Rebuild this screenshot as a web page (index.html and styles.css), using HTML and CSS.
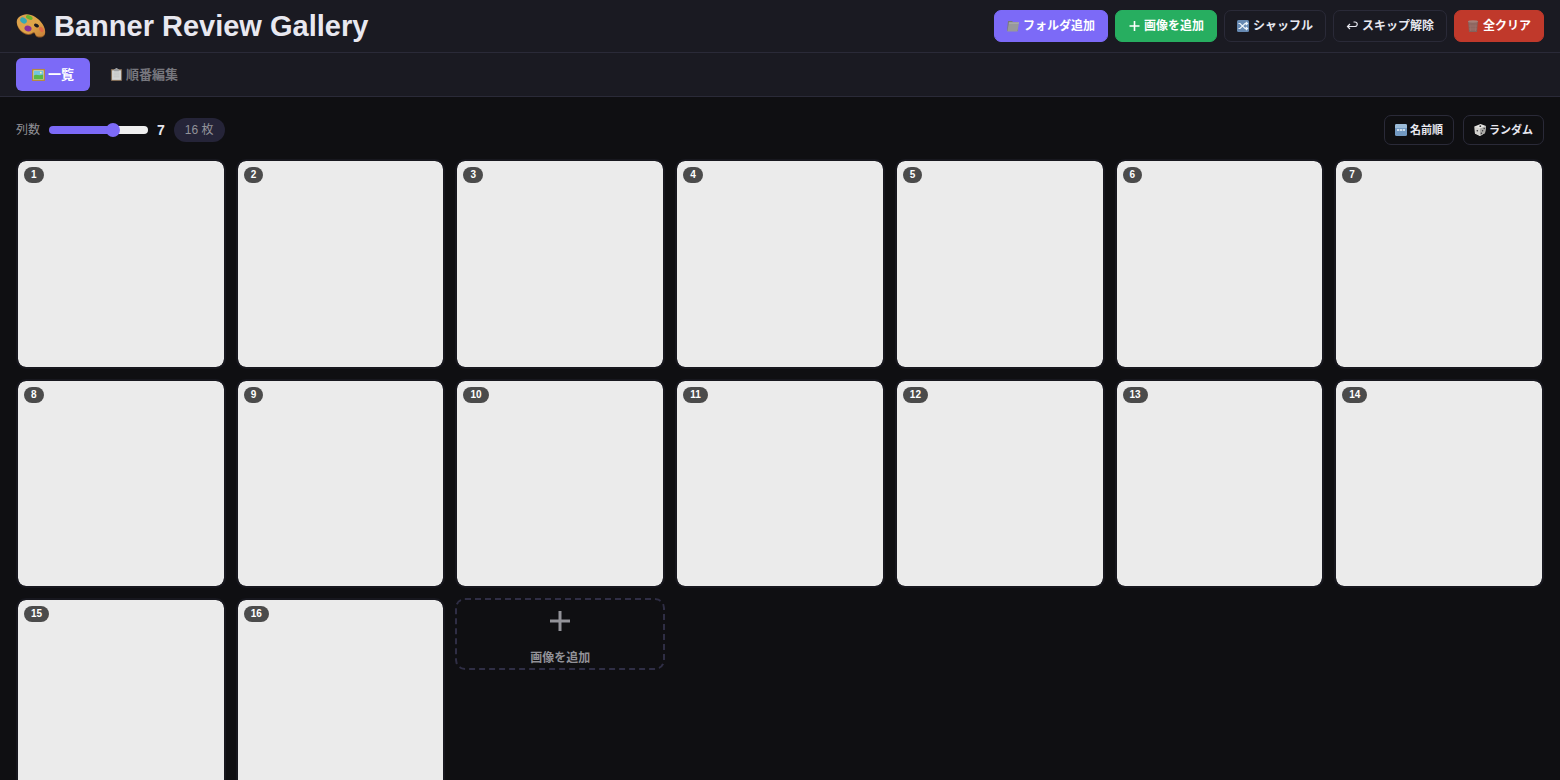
FILE: index.html
```html
<!DOCTYPE html>
<html lang="ja">
<head>
<meta charset="utf-8">
<meta name="viewport" content="width=device-width, initial-scale=1">
<title>Banner Review Gallery</title>
<link rel="stylesheet" href="styles.css">
</head>
<body>
<header class="header">
  <h1 class="title">
    <svg class="title-icon" viewBox="0 0 30 30" aria-hidden="true">
      <defs><linearGradient id="wood" x1="0" y1="0" x2="1" y2="1"><stop offset="0" stop-color="#d9a04e"/><stop offset=".55" stop-color="#e0a548"/><stop offset="1" stop-color="#c67f38"/></linearGradient></defs>
      <path fill="#8b5423" d="M7 5C13 2.500 22 7 26.500 14c3 5 3.500 9 1.500 11-2 2-5 1.700-7 1-2-.8-1.400-2.700-2.500-3.500-1.700-1-3 2-6.500 1.500C6 23 1 17.500.8 12 .7 8.600 3.500 6 7 5z"/>
      <path fill="url(#wood)" d="M7 4C13 1.500 22 6 26.500 13c3 5 3.500 9 1.500 11-2 2-5 1.700-7 1-2-.8-1.400-2.700-2.500-3.500-1.700-1-3 2-6.500 1.500C6 22 1 16.500.8 11 .7 7.600 3.500 5 7 4z"/>
      <ellipse cx="20.500" cy="14.500" rx="2.700" ry="1.700" transform="rotate(30 20.500 14.500)" fill="#1c1a22"/>
      <ellipse cx="13.300" cy="6.500" rx="3.500" ry="2" transform="rotate(25 13.300 6.500)" fill="#67b52d"/>
      <ellipse cx="7.500" cy="9.500" rx="3.600" ry="2.600" transform="rotate(35 7.500 9.500)" fill="#38a9b4"/>
      <ellipse cx="12" cy="17.500" rx="3.600" ry="2.800" transform="rotate(20 12 17.500)" fill="#8b2f98"/>
      <ellipse cx="25.300" cy="18.500" rx="2.900" ry="1.900" transform="rotate(60 25.300 18.500)" fill="#e06a45"/>
    </svg>
    Banner Review Gallery
  </h1>
  <div class="actions">
    <button class="btn btn-primary" type="button">
      <svg class="icon" viewBox="0 0 12 12" aria-hidden="true"><path fill="#77777c" d="M1 1h4l1 1h5v9H0z"/><path fill="#98999a" d="M2 2.500h10L10.500 11.500H.3z"/><path fill="#b4b5b3" d="M2 2.500h10l-.2 1H1.800z"/></svg>
      フォルダ追加</button>
    <button class="btn btn-success" type="button">
      <svg class="icon" viewBox="0 0 12 12" aria-hidden="true"><path stroke="#fff" stroke-width="1.600" d="M6.500 1v10M1.500 6h10"/></svg>
      画像を追加</button>
    <button class="btn" type="button">
      <svg class="icon" viewBox="0 0 12 12" aria-hidden="true"><rect width="12" height="12" rx="1.500" fill="#6689b2"/><path fill="none" stroke="#edf4fa" stroke-width="1.200" d="M1.500 3.500H3l5 5h2M1.500 8.500H3l5-5h2M8.800 2l1.700 1.500L8.800 5M8.800 7l1.700 1.500L8.800 10"/></svg>
      シャッフル</button>
    <button class="btn" type="button">
      <svg class="icon" viewBox="0 0 12 12" aria-hidden="true"><path fill="none" stroke="#e8e8f0" stroke-width="1.200" d="M7.500 2H9a2.200 2.200 0 0 1 0 4.500H1.500M4 4L1.500 6.500 4 9"/></svg>
      スキップ解除</button>
    <button class="btn btn-danger" type="button">
      <svg class="icon" viewBox="0 0 12 12" aria-hidden="true"><path fill="#85615c" d="M1 1h10L10 12H2z"/><ellipse cx="6" cy="1.500" rx="5" ry="1.200" fill="#a78079"/><path stroke="#a57770" stroke-width=".6" d="M3 3l.5 8M5 3v8M7 3v8M9 3l-.5 8M2 6h8M2 9h8"/></svg>
      全クリア</button>
  </div>
</header>
<nav class="tabs">
  <button class="tab tab-active" type="button">
    <svg class="icon tab-icon" viewBox="0 0 14 14" aria-hidden="true"><rect y="1" width="14" height="13" fill="#b58a43"/><rect x="1.500" y="2.500" width="11" height="10" fill="#e9e6bf"/><rect x="2" y="3" width="10" height="9" fill="#72c4df"/><path fill="#57b849" d="M2 8c3-2 5 1 10-1v5H2z"/><circle cx="9.500" cy="5" r="1" fill="#fff6ac"/></svg>
    一覧</button>
  <button class="tab" type="button">
    <svg class="icon tab-icon" viewBox="0 0 14 14" aria-hidden="true"><rect x="1" y="1" width="12" height="13" rx="1" fill="#806b56"/><path fill="#d4d5d5" d="M2.200 2.500h9.600v10.300H2.200z"/><path fill="#999ca0" d="M4.500 1h1.300a1.200 1.200 0 0 1 2.400 0h1.300v2.500h-5z"/><path stroke="#b5b6b7" stroke-width=".6" d="M4 5.500h6M4 7.500h6M4 9.500h6"/></svg>
    順番編集</button>
</nav>
<main class="content">
  <div class="toolbar">
    <label class="columns-label" for="columns">列数</label>
    <input class="slider" id="columns" type="range" min="1" max="10" value="7">
    <output class="columns-value" for="columns">7</output>
    <span class="count">16 枚</span>
    <div class="sort">
      <button class="btn btn-small" type="button">
        <svg class="icon" viewBox="0 0 12 12" aria-hidden="true"><rect width="12" height="12" rx="1.500" fill="#7299c2"/><path fill="#9bbbd8" d="M1.500 0h9A1.500 1.500 0 0 1 12 1.500V4H0V1.500A1.500 1.500 0 0 1 1.500 0z"/><path stroke="#e2edf5" stroke-width="1.600" d="M2 6h8"/><path stroke="#5f86b3" stroke-width=".5" d="M4.500 5v2M7.500 5v2"/></svg>
        名前順</button>
      <button class="btn btn-small" type="button">
        <svg class="icon" viewBox="0 0 12 12" aria-hidden="true"><path fill="#e6e5e2" d="M.5 2.500L6.500 0 12 2l-1 7-5 3-5-2.500z"/><path fill="#aaa9a6" d="M6 4.500L12 2l-1 7-5 3z"/><path fill="#d2d1ce" d="M.5 2.500L6 4.500V12L1 9.500z"/><g fill="#37363a"><circle cx="6.300" cy="2.200" r=".9"/><circle cx="3.300" cy="6.700" r=".8"/><circle cx="10.200" cy="4.500" r=".7"/><circle cx="8.600" cy="6.800" r=".7"/><circle cx="7.400" cy="9.200" r=".7"/></g></svg>
        ランダム</button>
    </div>
  </div>
  <div class="grid">
    <article class="card"><span class="badge">1</span></article>
    <article class="card"><span class="badge">2</span></article>
    <article class="card"><span class="badge">3</span></article>
    <article class="card"><span class="badge">4</span></article>
    <article class="card"><span class="badge">5</span></article>
    <article class="card"><span class="badge">6</span></article>
    <article class="card"><span class="badge">7</span></article>
    <article class="card"><span class="badge">8</span></article>
    <article class="card"><span class="badge">9</span></article>
    <article class="card"><span class="badge">10</span></article>
    <article class="card"><span class="badge">11</span></article>
    <article class="card"><span class="badge">12</span></article>
    <article class="card"><span class="badge">13</span></article>
    <article class="card"><span class="badge">14</span></article>
    <article class="card"><span class="badge">15</span></article>
    <article class="card"><span class="badge">16</span></article>
    <button class="add-card" type="button">
      <svg class="add-icon" viewBox="0 0 20 20" aria-hidden="true"><path stroke="#929298" stroke-width="3" d="M10 0v20M0 10h20"/></svg>
      画像を追加</button>
  </div>
</main>
</body>
</html>
```
FILE: styles.css
```css
* { box-sizing: border-box; }

body {
  margin: 0;
  height: 100vh;
  display: flex;
  flex-direction: column;
  overflow: hidden;
  background: #0f0f12;
  color: #e8e8f0;
  font-family: "Liberation Sans", "Noto Sans CJK JP", sans-serif;
  font-size: 12px;
  line-height: 16px;
}

button { font-family: inherit; line-height: inherit; cursor: pointer; }

.header {
  display: flex;
  align-items: center;
  justify-content: space-between;
  padding: 10px 16px;
  background: #1a1a22;
  border-bottom: 1px solid #2a2a38;
}

.title {
  display: flex;
  align-items: center;
  gap: 8px;
  margin: 0;
  font-size: 29px;
  line-height: 32px;
  white-space: nowrap;
}

.title-icon { width: 30px; height: 30px; }

.actions { display: flex; gap: 7px; }

.btn {
  display: flex;
  align-items: center;
  gap: 4px;
  height: 32px;
  padding: 0 12px;
  border: 1px solid #2a2a38;
  border-radius: 7px;
  background: transparent;
  color: #e8e8f0;
  font-size: 12px;
  font-weight: 700;
  white-space: nowrap;
}

.btn-primary { background: #7c6af7; border-color: #7c6af7; color: #fff; }
.btn-success { background: #27ae60; border-color: #27ae60; color: #fff; }
.btn-danger { background: #c0392b; border-color: #c0392b; color: #fff; }

.btn-small { height: 30px; padding: 0 10px; gap: 3px; font-size: 11px; }

.icon { flex: none; width: 12px; height: 12px; fill: none; }
.tab-icon { width: 13px; height: 13px; }

.tabs {
  display: flex;
  gap: 4px;
  padding: 5px 16px;
  background: #1a1a22;
  border-bottom: 1px solid #2a2a38;
}

.tab {
  display: flex;
  align-items: center;
  gap: 3px;
  height: 33px;
  padding: 0 16px;
  border: 0;
  border-radius: 6px;
  background: transparent;
  color: #77777e;
  font-size: 13px;
  font-weight: 700;
}

.tab-active { background: #7c6af7; color: #fff; }

.content {
  flex: 1;
  min-height: 0;
  overflow-y: auto;
  scrollbar-width: none;
  padding: 18px 16px;
}

.toolbar {
  display: flex;
  align-items: center;
  gap: 9px;
  margin-bottom: 14px;
}

.columns-label { color: #929298; }

.slider {
  appearance: none;
  width: 99px;
  height: 8px;
  margin: 0;
  border-radius: 4px;
  background: linear-gradient(to right, #7c6af7 65%, #efefef 65%);
}

.slider::-webkit-slider-thumb {
  appearance: none;
  width: 14px;
  height: 14px;
  border-radius: 50%;
  background: #7c6af7;
}

.columns-value { font-size: 14px; font-weight: 700; }

.count {
  padding: 0 11px;
  border-radius: 12px;
  background: #252438;
  color: #929298;
  line-height: 24px;
}

.sort { display: flex; gap: 9px; margin-left: auto; }

.grid {
  display: grid;
  grid-template-columns: repeat(7, minmax(0, 1fr));
  align-items: start;
  gap: 10px;
}

.card {
  position: relative;
  aspect-ratio: 1;
  border: 2px solid #17171e;
  border-radius: 10px;
  background: #ebebeb;
  background-clip: padding-box;
}

.badge {
  position: absolute;
  top: 6px;
  left: 6px;
  padding: 0 7px;
  border-radius: 8px;
  background: #4b4b4b;
  color: #fff;
  font-size: 10px;
  font-weight: 700;
  line-height: 16px;
}

.add-card {
  display: flex;
  flex-direction: column;
  align-items: center;
  justify-content: space-between;
  height: 72px;
  padding: 11px 0 2px;
  border: 2px dashed #2f2e45;
  border-radius: 10px;
  background: transparent;
  color: #929298;
  font-size: 12px;
  font-weight: 700;
}

.add-icon { width: 20px; height: 20px; }
```
